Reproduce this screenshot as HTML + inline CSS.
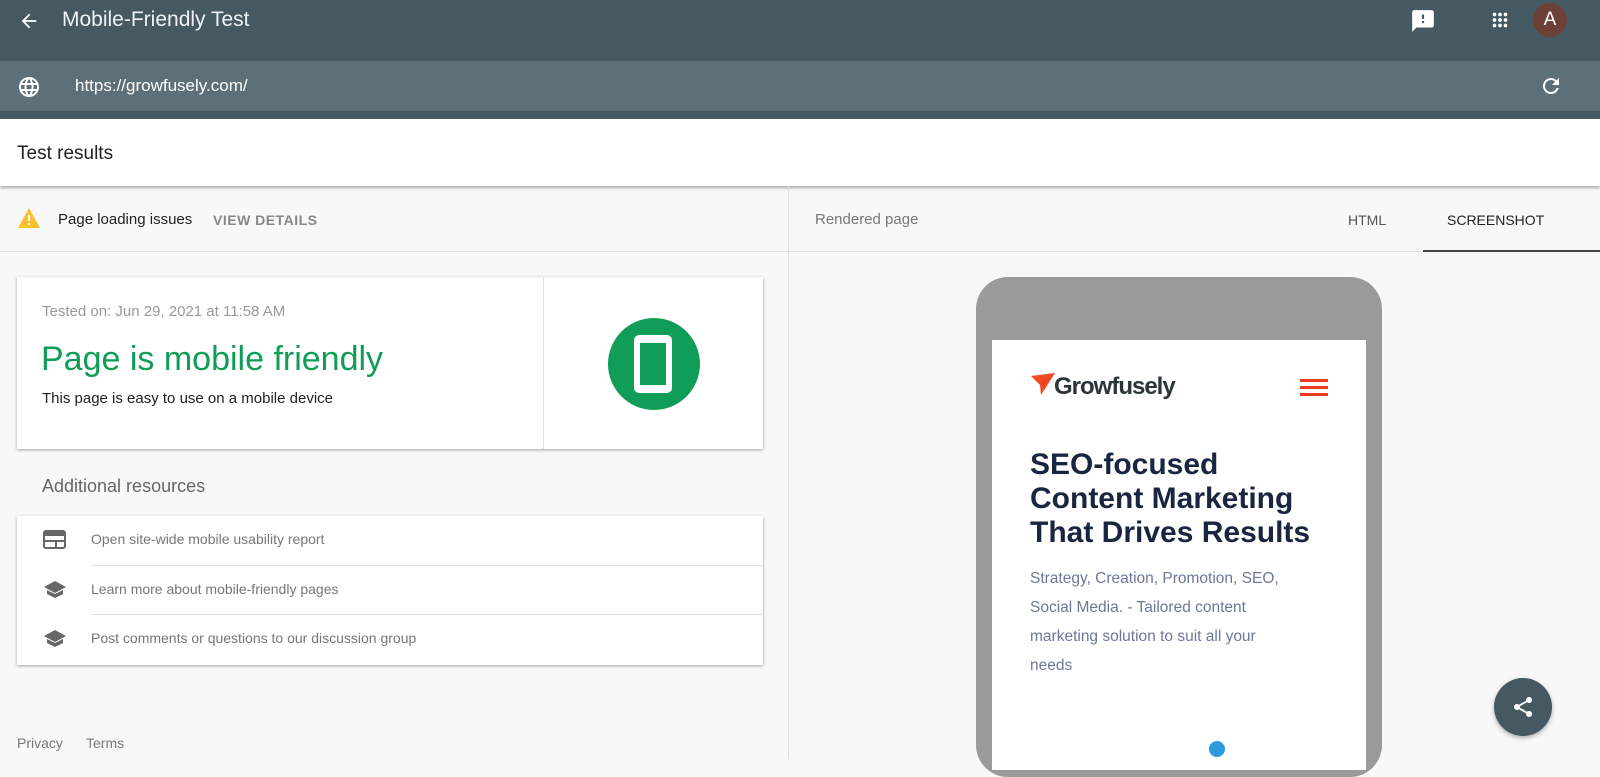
<!DOCTYPE html><html><head><style>
*{margin:0;padding:0;box-sizing:border-box}
body{width:1600px;height:759px;overflow:hidden;background:#f8f8f8;font-family:"Liberation Sans",Roboto,sans-serif;position:relative}
.a{position:absolute}
</style></head><body>
<div class="a" style="left:0;top:0;width:1600px;height:119px;background:#465963"></div>
<div class="a" style="left:0;top:61px;width:1600px;height:50px;background:#5d6f79"></div>
<svg class="a" style="left:18px;top:10px" width="22" height="22" viewBox="0 0 24 24"><path d="M20 11H7.8l5.6-5.6L12 4l-8 8 8 8 1.4-1.4L7.8 13H20z" fill="#fff"/></svg>
<div class="a" style="left:62px;top:8px;font-size:21px;color:#eef2f4">Mobile-Friendly Test</div>
<svg class="a" style="left:1410px;top:8px" width="26" height="26" viewBox="0 0 24 24"><path d="M20 2H4c-1.1 0-2 .9-2 2v18l4-4h14c1.1 0 2-.9 2-2V4c0-1.1-.9-2-2-2zm-7 12h-2v-2h2zm0-4h-2V6h2z" fill="#fff"/></svg>
<svg class="a" style="left:1489px;top:9px" width="22" height="22" viewBox="0 0 24 24" fill="#fff"><circle cx="6" cy="6" r="2"/><circle cx="12" cy="6" r="2"/><circle cx="18" cy="6" r="2"/><circle cx="6" cy="12" r="2"/><circle cx="12" cy="12" r="2"/><circle cx="18" cy="12" r="2"/><circle cx="6" cy="18" r="2"/><circle cx="12" cy="18" r="2"/><circle cx="18" cy="18" r="2"/></svg>
<div class="a" style="left:1533px;top:3px;width:34px;height:34px;border-radius:50%;background:#6d4038;color:#fff;font-size:19px;text-align:center;line-height:34px">A</div>
<svg class="a" style="left:17px;top:75px" width="24" height="24" viewBox="0 0 24 24"><path d="M12 2a10 10 0 100 20 10 10 0 000-20zm6.9 6h-2.9a15.6 15.6 0 00-1.4-3.6A8 8 0 0118.9 8zM12 4c.8 1.2 1.5 2.5 1.9 4h-3.8c.4-1.4 1.1-2.8 1.9-4zM4.3 14a8 8 0 010-4h3.4c-.1.7-.2 1.3-.2 2s.1 1.3.2 2zm.8 2h3a15.6 15.6 0 001.4 3.6A8 8 0 015.1 16zm3-8h-3a8 8 0 014.3-3.6C8.9 5.6 8.4 6.8 8.1 8zM12 20c-.8-1.2-1.5-2.5-1.9-4h3.8c-.4 1.4-1.1 2.800-1.9 4zm2.3-6H9.7c-.1-.7-.2-1.3-.2-2s.1-1.3.2-2h4.7c.1.7.2 1.3.2 2s-.1 1.3-.3 2zm.3 5.6c.6-1.1 1.1-2.3 1.4-3.6h3a8 8 0 01-4.4 3.6zm1.8-5.6c.1-.7.2-1.3.2-2s-.1-1.3-.2-2h3.4a8 8 0 010 4z" fill="#fff"/></svg>
<div class="a" style="left:75px;top:76px;font-size:17px;color:#fff">https://growfusely.com/</div>
<svg class="a" style="left:1539px;top:74px" width="24" height="24" viewBox="0 0 24 24"><path d="M17.6 6.4A8 8 0 1019.7 14h-2.1A6 6 0 1112 6c1.7 0 3.1.7 4.2 1.8L13 11h7V4z" fill="#fff"/></svg>
<div class="a" style="left:0;top:119px;width:1600px;height:67px;background:#fff;box-shadow:0 2px 3px rgba(0,0,0,.3)"></div>
<div class="a" style="left:17px;top:143px;font-size:19px;color:#222">Test results</div>
<div class="a" style="left:788px;top:186px;width:1px;height:573px;background:#e0e0e0"></div>
<div class="a" style="left:0;top:251px;width:1600px;height:1px;background:#e0e0e0"></div>
<svg class="a" style="left:17px;top:207px" width="24" height="22" viewBox="0 0 24 22"><path d="M12 1L1 21h22z" fill="#fbc02d"/><rect x="11" y="8" width="2" height="6" fill="#fff"/><rect x="11" y="16" width="2" height="2" fill="#fff"/></svg>
<div class="a" style="left:58px;top:211px;font-size:15px;color:#222">Page loading issues</div>
<div class="a" style="left:213px;top:212px;font-size:14px;color:#888;font-weight:bold;letter-spacing:.5px">VIEW DETAILS</div>
<div class="a" style="left:815px;top:211px;font-size:15px;color:#777">Rendered page</div>
<div class="a" style="left:1348px;top:212px;font-size:14px;color:#555">HTML</div>
<div class="a" style="left:1447px;top:212px;font-size:14px;color:#222">SCREENSHOT</div>
<div class="a" style="left:1423px;top:250px;width:177px;height:2px;background:#444"></div>
<div class="a" style="left:17px;top:277px;width:746px;height:172px;background:#fff;box-shadow:0 1px 3px rgba(0,0,0,.35)"></div>
<div class="a" style="left:543px;top:277px;width:1px;height:172px;background:#e0e0e0"></div>
<div class="a" style="left:42px;top:303px;font-size:15px;color:#999">Tested on: Jun 29, 2021 at 11:58 AM</div>
<div class="a" style="left:41px;top:340px;font-size:34px;color:#0f9d58">Page is mobile friendly</div>
<div class="a" style="left:42px;top:390px;font-size:15px;color:#222">This page is easy to use on a mobile device</div>
<div class="a" style="left:608px;top:318px;width:92px;height:92px;border-radius:50%;background:#0f9d58"></div>
<div class="a" style="left:634px;top:335px;width:38px;height:58px;border-radius:5px;background:#fff"></div>
<div class="a" style="left:640px;top:343px;width:26px;height:42px;background:#0f9d58"></div>
<div class="a" style="left:42px;top:476px;font-size:18px;color:#666">Additional resources</div>
<div class="a" style="left:17px;top:516px;width:746px;height:149px;background:#fff;box-shadow:0 1px 3px rgba(0,0,0,.35)"></div>
<div class="a" style="left:92px;top:565px;width:671px;height:1px;background:#e0e0e0"></div>
<div class="a" style="left:92px;top:614px;width:671px;height:1px;background:#e0e0e0"></div>
<svg class="a" style="left:43px;top:530px" width="23" height="19" viewBox="0 0 23 19"><rect x="1" y="1" width="21" height="17" rx="2" fill="none" stroke="#666" stroke-width="2"/><rect x="1" y="1" width="21" height="5" fill="#666"/><rect x="2" y="10" width="19" height="2" fill="#666"/><rect x="12" y="10" width="2" height="8" fill="#666"/></svg>
<svg class="a" style="left:43px;top:580px" width="24" height="20" viewBox="0 0 24 20"><path d="M12 1L1 7l11 6 11-6z" fill="#666"/><path d="M4 10v4l8 4 8-4v-4l-8 4z" fill="#666"/></svg>
<svg class="a" style="left:43px;top:629px" width="24" height="20" viewBox="0 0 24 20"><path d="M12 1L1 7l11 6 11-6z" fill="#666"/><path d="M4 10v4l8 4 8-4v-4l-8 4z" fill="#666"/></svg>
<div class="a" style="left:91px;top:531px;font-size:14px;color:#777">Open site-wide mobile usability report</div>
<div class="a" style="left:91px;top:581px;font-size:14px;color:#777">Learn more about mobile-friendly pages</div>
<div class="a" style="left:91px;top:630px;font-size:14px;color:#777">Post comments or questions to our discussion group</div>
<div class="a" style="left:17px;top:735px;font-size:14px;color:#777">Privacy</div>
<div class="a" style="left:86px;top:735px;font-size:14px;color:#777">Terms</div>
<div class="a" style="left:976px;top:277px;width:406px;height:500px;border-radius:32px;background:#9a9a9a"></div>
<div class="a" style="left:992px;top:340px;width:374px;height:430px;background:#fff"></div>
<svg class="a" style="left:1031px;top:373px" width="26" height="22" viewBox="0 0 26 22"><path d="M0 3L24 0 10 22 9 12z" fill="#f04a23"/><path d="M9 12L24 0 12 10z" fill="#b02a10"/></svg>
<div class="a" style="left:1054px;top:373px;font-size:24px;font-weight:bold;color:#2b3538;letter-spacing:-1px">Growfusely</div>
<div class="a" style="left:1300px;top:379px;width:28px;height:3px;background:#ef3a1e;box-shadow:0 7px 0 #ef3a1e,0 14px 0 #ef3a1e"></div>
<div class="a" style="left:1030px;top:448px;font-size:30px;font-weight:bold;color:#1a2540;line-height:34px;width:290px">SEO-focused Content Marketing That Drives Results</div>
<div class="a" style="left:1030px;top:564px;font-size:15.5px;color:#6d779a;line-height:29px;width:250px">Strategy, Creation, Promotion, SEO, Social Media. - Tailored content marketing solution to suit all your needs</div>
<div class="a" style="left:1209px;top:741px;width:16px;height:16px;border-radius:50%;background:#2d9be0"></div>
<div class="a" style="left:1494px;top:678px;width:58px;height:58px;border-radius:50%;background:#465963;box-shadow:0 2px 5px rgba(0,0,0,.3)"></div>
<svg class="a" style="left:1511px;top:695px" width="24" height="24" viewBox="0 0 24 24"><path d="M18 16a3 3 0 00-2 .8L8.9 12.7a3 3 0 000-1.4L16 7.2A3 3 0 1015 5a3 3 0 000 .7L8 9.8a3 3 0 100 4.4l7.1 4.2a3 3 0 102.9-2.4z" fill="#fff"/></svg>
</body></html>
